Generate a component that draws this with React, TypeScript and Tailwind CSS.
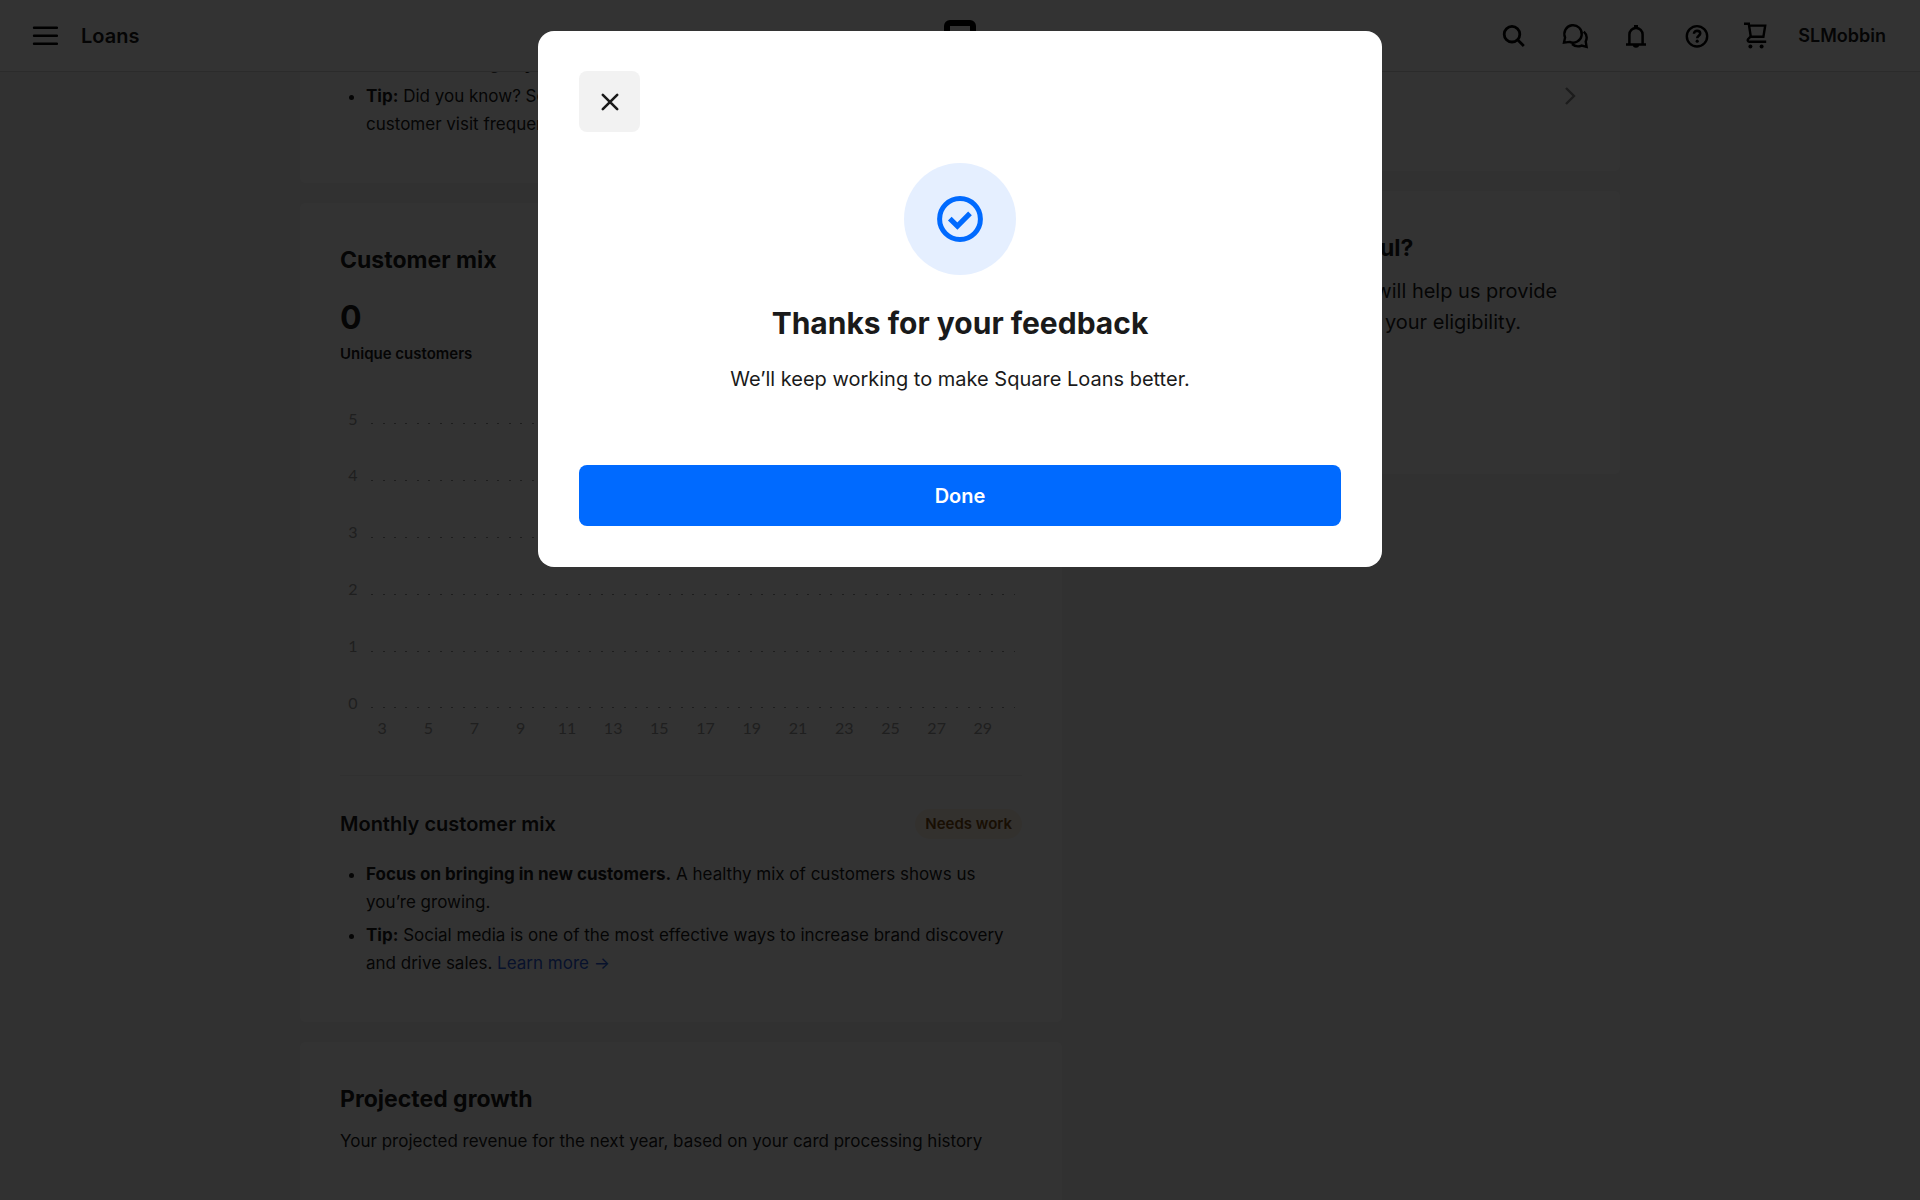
import { useState, type ReactNode } from 'react';

const DAYS = [3, 5, 7, 9, 11, 13, 15, 17, 19, 21, 23, 25, 27, 29];
const LEVELS = [5, 4, 3, 2, 1, 0];

function SearchIcon() {
  return (
    <svg viewBox="0 0 28 28" className="w-7 h-7" fill="none" stroke="currentColor" strokeWidth="2.8">
      <circle cx="12" cy="12.2" r="7.8" />
      <path d="M17.6 17.8 23.8 24" />
    </svg>
  );
}

function ChatIcon() {
  return (
    <svg viewBox="0 0 28 28" className="w-7 h-7" fill="none" stroke="currentColor" strokeWidth="2.4">
      <path d="M3 20.6 4.1 15.4A8.7 8.7 0 1 1 8.6 19.9Z" />
      <path d="M22.8 9.6a8.4 8.4 0 0 1 1.9 9.8l.9 5.4-5-1.2a9.4 9.4 0 0 1-9.6-1.6" />
    </svg>
  );
}

function BellIcon() {
  return (
    <svg viewBox="0 0 28 28" className="w-7 h-7" fill="none" stroke="currentColor" strokeWidth="2.5">
      <path d="M4 22.4h20M7.4 22v-9.4a6.6 6.6 0 0 1 13.2 0V22" />
      <path d="M14 3v3" strokeWidth="4" />
      <path d="M10.8 22.5h6.4a3.2 3.2 0 0 1-6.4 0Z" fill="currentColor" stroke="none" />
    </svg>
  );
}

function HelpIcon() {
  return (
    <svg viewBox="0 0 28 28" className="w-7 h-7" fill="none" stroke="currentColor" strokeWidth="2.4">
      <circle cx="14" cy="14.3" r="10.2" />
      <path d="M11 11.8c0-4 6.2-3.6 6.2-.3 0 2.3-3 2.3-3 4.8" strokeWidth="2.6" />
      <circle cx="14.2" cy="19.2" r="1.6" fill="currentColor" stroke="none" />
    </svg>
  );
}

function CartIcon() {
  return (
    <svg viewBox="0 0 24 28" className="w-6 h-7" fill="none" stroke="currentColor" strokeWidth="2.4">
      <path d="M0 1.8h6M4.4 3.6h16.8l-1.8 11.2H6.8L4.8 2" />
      <path d="M6.8 14.4 4 17.2a1.6 1.6 0 0 0 1.2 2.6h17" />
      <circle cx="6.4" cy="24.4" r="2" fill="currentColor" stroke="none" />
      <circle cx="17.6" cy="24.4" r="2" fill="currentColor" stroke="none" />
    </svg>
  );
}

function Header() {
  const actions = [
    { label: 'Search', icon: <SearchIcon /> },
    { label: 'Messages', icon: <ChatIcon /> },
    { label: 'Notifications', icon: <BellIcon /> },
    { label: 'Help', icon: <HelpIcon /> },
    { label: 'Shop', icon: <CartIcon /> },
  ];

  return (
    <header className="relative z-10 flex h-[72px] shrink-0 items-center justify-between border-b border-[#d4d4d4] bg-white pl-8 pr-[34px]">
      <div className="flex items-center gap-[23px]">
        <button aria-label="Menu" className="h-6 text-black">
          <svg viewBox="0 0 26 24" className="h-6 w-[26px]" stroke="currentColor" strokeWidth="2.4" strokeLinecap="round">
            <path d="M2 3.8h23M2 11.8h23M2 19.8h23" />
          </svg>
        </button>
        <span className="text-xl font-semibold">Loans</span>
      </div>

      <svg viewBox="0 0 32 32" className="absolute left-1/2 top-5 h-8 w-8 -translate-x-1/2 text-black" fill="none">
        <rect x="3" y="3" width="26" height="26" rx="3" stroke="currentColor" strokeWidth="6" />
        <rect x="11" y="11" width="10" height="10" rx="1" fill="currentColor" />
      </svg>

      <div className="flex items-center gap-[30px]">
        <div className="flex items-center gap-[33px] text-black">
          {actions.map((a) => (
            <button key={a.label} aria-label={a.label}>{a.icon}</button>
          ))}
        </div>
        <button className="text-lg font-semibold">SLMobbin</button>
      </div>
    </header>
  );
}

function Card({ children }: { children: ReactNode }) {
  return <section className="rounded-md bg-white px-10 pt-[41px] pb-[45px]">{children}</section>;
}

function TipList({ children }: { children: ReactNode }) {
  return <ul className="list-disc space-y-[5px] pl-[26px] text-[17px] leading-7">{children}</ul>;
}

function CustomerChart() {
  return (
    <svg viewBox="0 0 681 340" className="block w-full" role="img" aria-label="Unique customers per day">
      {LEVELS.map((level, i) => {
        const y = 20.5 + i * 56.8;
        return (
          <g key={level}>
            <text x="13" y={y + 1} textAnchor="middle" fontSize="16" fill="#9a9a9a" className="font-['Lato',sans-serif]">{level}</text>
            <line x1="31" x2="674" y1={y} y2={y} stroke="#8f8f8f" strokeWidth="1" strokeDasharray="2 9.46" shapeRendering="crispEdges" />
          </g>
        );
      })}
      {DAYS.map((day, i) => (
        <text key={day} x={42 + i * 46.15} y="331" textAnchor="middle" fontSize="16" fill="#9a9a9a" className="font-['Lato',sans-serif]">
          {day}
        </text>
      ))}
    </svg>
  );
}

function FeedbackDialog({ onClose }: { onClose: () => void }) {
  return (
    <div className="fixed inset-0 z-20 flex items-start justify-center bg-black/80 pt-[31px]">
      <div role="dialog" aria-modal="true" aria-labelledby="feedback-title" className="flex w-[844px] flex-col items-center rounded-2xl bg-white px-[41px] pt-10 pb-[41px]">
        <button
          onClick={onClose}
          aria-label="Close"
          className="flex h-[61px] w-[61px] items-center justify-center self-start rounded-lg bg-[#f2f2f2]"
        >
          <svg viewBox="0 0 20 20" className="h-5 w-5" stroke="currentColor" strokeWidth="2.6" strokeLinecap="round">
            <path d="m2.8 2.8 14.4 14.4M17.2 2.8 2.8 17.2" />
          </svg>
        </button>

        <div className="mt-[31px] flex h-28 w-28 items-center justify-center rounded-full bg-[#e5efff] text-[#006aff]">
          <svg viewBox="0 0 46 46" className="h-[46px] w-[46px]" fill="none" stroke="currentColor">
            <circle cx="23" cy="23" r="20.4" strokeWidth="5" />
            <path d="m12.8 22.6 7.6 7.4L33 17.4" strokeWidth="5.2" />
          </svg>
        </div>

        <h2 id="feedback-title" className="mt-7 text-3xl leading-10 font-bold">Thanks for your feedback</h2>
        <p className="mt-5 text-xl leading-8">We’ll keep working to make Square Loans better.</p>
        <button onClick={onClose} className="mt-[70px] h-[61px] w-full rounded-lg bg-[#006aff] text-xl font-semibold text-white">
          Done
        </button>
      </div>
    </div>
  );
}

export default function App() {
  const [open, setOpen] = useState(true);

  return (
    <div className="flex h-screen flex-col overflow-hidden bg-[#f6f6f6] font-['Inter',sans-serif] text-[#1a1a1a]">
      <Header />

      <main className="min-h-0 flex-1 overflow-hidden">
        <div className="mx-auto -mt-16 flex max-w-[1320px] items-start gap-5">
          <div className="flex min-w-0 flex-1 flex-col gap-5">
            <Card>
              <TipList>
                <li>
                  <b className="font-bold">Focus on selling to your regulars.</b> They come back more often.
                </li>
                <li>
                  <b className="font-bold">Tip:</b> Did you know? Sending out a loyalty reward is a great way to increase customer visit frequency.
                </li>
              </TipList>
            </Card>

            <Card>
              <h2 className="text-[23px] leading-8 font-bold">Customer mix</h2>
              <p className="mt-[22px] text-[32px] leading-10 font-bold">0</p>
              <p className="mt-1 text-[15px] leading-6 font-semibold">Unique customers</p>
              <div className="mt-[37px] border-b border-[#f0f0f0] pb-8">
                <CustomerChart />
              </div>

              <div className="mt-8 flex items-center justify-between">
                <h3 className="text-xl leading-8 font-semibold">Monthly customer mix</h3>
                <span className="rounded-full bg-[#fff2e6] px-[10px] text-[15px] leading-[30px] font-semibold text-[#7a4a10]">Needs work</span>
              </div>
              <div className="mt-5">
                <TipList>
                  <li>
                    <b className="font-bold">Focus on bringing in new customers.</b> A healthy mix of customers shows us you’re growing.
                  </li>
                  <li>
                    <b className="font-bold">Tip:</b> Social media is one of the most effective ways to increase brand discovery and drive sales.{' '}
                    <a href="#learn-more" className="text-[#2b5cd9]">Learn more →</a>
                  </li>
                </TipList>
              </div>
            </Card>

            <Card>
              <h2 className="text-[23px] leading-8 font-bold">Projected growth</h2>
              <p className="mt-3 text-[17px] leading-7">Your projected revenue for the next year, based on your card processing history</p>
              <div className="h-60" />
            </Card>
          </div>

          <div className="flex w-[538px] shrink-0 flex-col gap-5">
            <Card>
              <a href="#eligibility" className="mt-4 flex h-[61px] items-center justify-between text-[17px] leading-7">
                Loan eligibility
                <svg viewBox="0 0 20 20" className="h-5 w-5 text-[#8a8a8a]" fill="none" stroke="currentColor" strokeWidth="2.4">
                  <path d="m6 2 8 8-8 8" />
                </svg>
              </a>
            </Card>

            <Card>
              <h2 className="text-[23px] leading-8 font-bold">Is this information useful?</h2>
              <p className="mt-3 text-xl leading-[31px]">
                Sharing detailed feedback will help us provide better tools for determining your eligibility.
              </p>
              <div className="mt-[35px] flex h-14 gap-4">
                <button className="w-28 rounded-lg">Yes</button>
                <button className="w-28 rounded-lg">No</button>
              </div>
            </Card>
          </div>
        </div>
      </main>

      {open && <FeedbackDialog onClose={() => setOpen(false)} />}
    </div>
  );
}
